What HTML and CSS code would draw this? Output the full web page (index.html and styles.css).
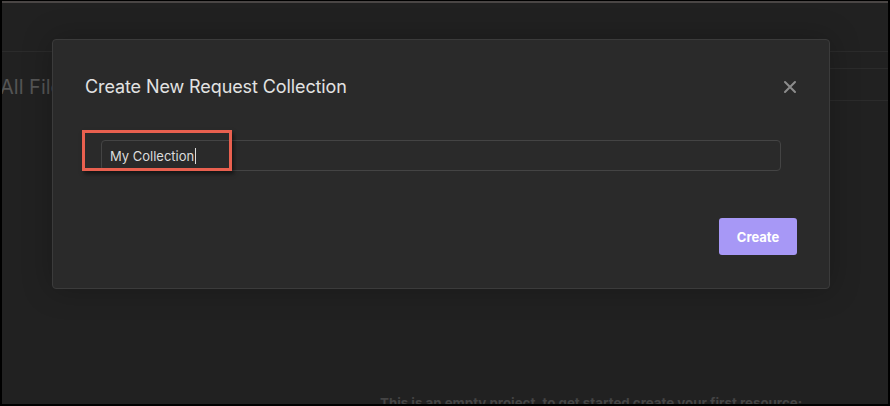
FILE: index.html
```html
<!DOCTYPE html>
<html>
<head>
<meta charset="utf-8">
<link rel="stylesheet" href="styles.css">
</head>
<body>
<div class="screen">
  <div class="app">
    <div class="topbar"></div>
    <div class="main">
      <div class="left">
        <div class="heading">All Files</div>
      </div>
      <div class="right">
        <div class="rrow1"></div>
        <div class="rrow2"></div>
        <div class="empty">This is an empty project, to get started create your first resource:</div>
      </div>
    </div>
  </div>
  <div class="backdrop">
    <div class="modal">
      <div class="modal-head">
        <h2 class="title">Create New Request Collection</h2>
        <svg class="close" width="14" height="14" viewBox="0 0 14 14"><path d="M2 2L12 12M12 2L2 12" stroke="#8c8c8c" stroke-width="2" stroke-linecap="round"/></svg>
      </div>
      <div class="modal-body">
        <div class="input"><span class="value">My Collection</span><span class="caret"></span></div>
      </div>
      <div class="modal-foot">
        <button class="create">Create</button>
      </div>
    </div>
  </div>
  <div class="highlight"></div>
</div>
</body>
</html>
```
FILE: styles.css
```css
html, body { margin: 0; padding: 0; background: #000; }
body { width: 890px; height: 406px; overflow: hidden; font-family: Inter, "Noto Sans", sans-serif; }
.screen {
  position: relative;
  margin: 1px 2px 0 2px;
  width: 886px;
  height: 403px;
  background: #212121;
  border-top: 2px solid #4a4645;
  box-sizing: border-box;
  overflow: hidden;
}
.app { display: flex; flex-direction: column; height: 100%; }
.topbar { height: 48px; border-bottom: 1px solid #2b2b2b; flex: none; }
.main { display: flex; flex: 1; }
.left { width: 560px; padding-top: 23px; }
.heading { font-size: 20px; color: #555; margin-left: -2px; line-height: 24px; }
.right { flex: 1; display: flex; flex-direction: column; }
.rrow1 { height: 16px; border-bottom: 1px solid #2b2b2b; }
.rrow2 { height: 31px; border-bottom: 1px solid #2b2b2b; }
.empty { margin-top: 294px; margin-left: -182px; font-size: 13.3px; font-weight: 700; color: #444; white-space: nowrap; }
.backdrop { position: absolute; inset: 0; }
.modal {
  position: absolute;
  left: 50px; top: 36px;
  width: 778px; height: 250px;
  box-sizing: border-box;
  background: #2a2a2a;
  border: 1px solid #3b3b3b;
  border-radius: 4px;
  box-shadow: 0 0 30px rgba(0,0,0,0.25);
  display: flex; flex-direction: column;
}
.modal-head { display: flex; align-items: center; justify-content: space-between; padding: 34px 32px 0 32px; height: 24px; }
.title { margin: 0; font-size: 18px; font-weight: 400; color: #e2e2e2; letter-spacing: -0.1px; }
.close { display: block; margin-top: 2px; }
.modal-body { padding: 42px 48px 0 48px; }
.input {
  height: 31px; box-sizing: border-box;
  border: 1px solid #444;
  border-radius: 4px;
  background: #2a2a2a;
  display: flex; align-items: center;
  padding-left: 8px;
  font-size: 13px; color: #dcdcdc;
}
.caret { width: 1px; height: 16px; background: #dcdcdc; margin-left: 1px; }
.modal-foot { display: flex; justify-content: flex-end; padding: 47px 32px 0 0; }
.create {
  width: 78px; height: 37px;
  border: 0; border-radius: 3px;
  background: #a798f6;
  color: #fff; font-family: inherit; font-size: 13px; font-weight: 700;
}
.highlight {
  position: absolute;
  left: 80px; top: 127px;
  width: 150px; height: 41px;
  box-sizing: border-box;
  border: 3px solid #e9604f;
  box-shadow: 2px 3px 4px rgba(0,0,0,0.5);
}
```
